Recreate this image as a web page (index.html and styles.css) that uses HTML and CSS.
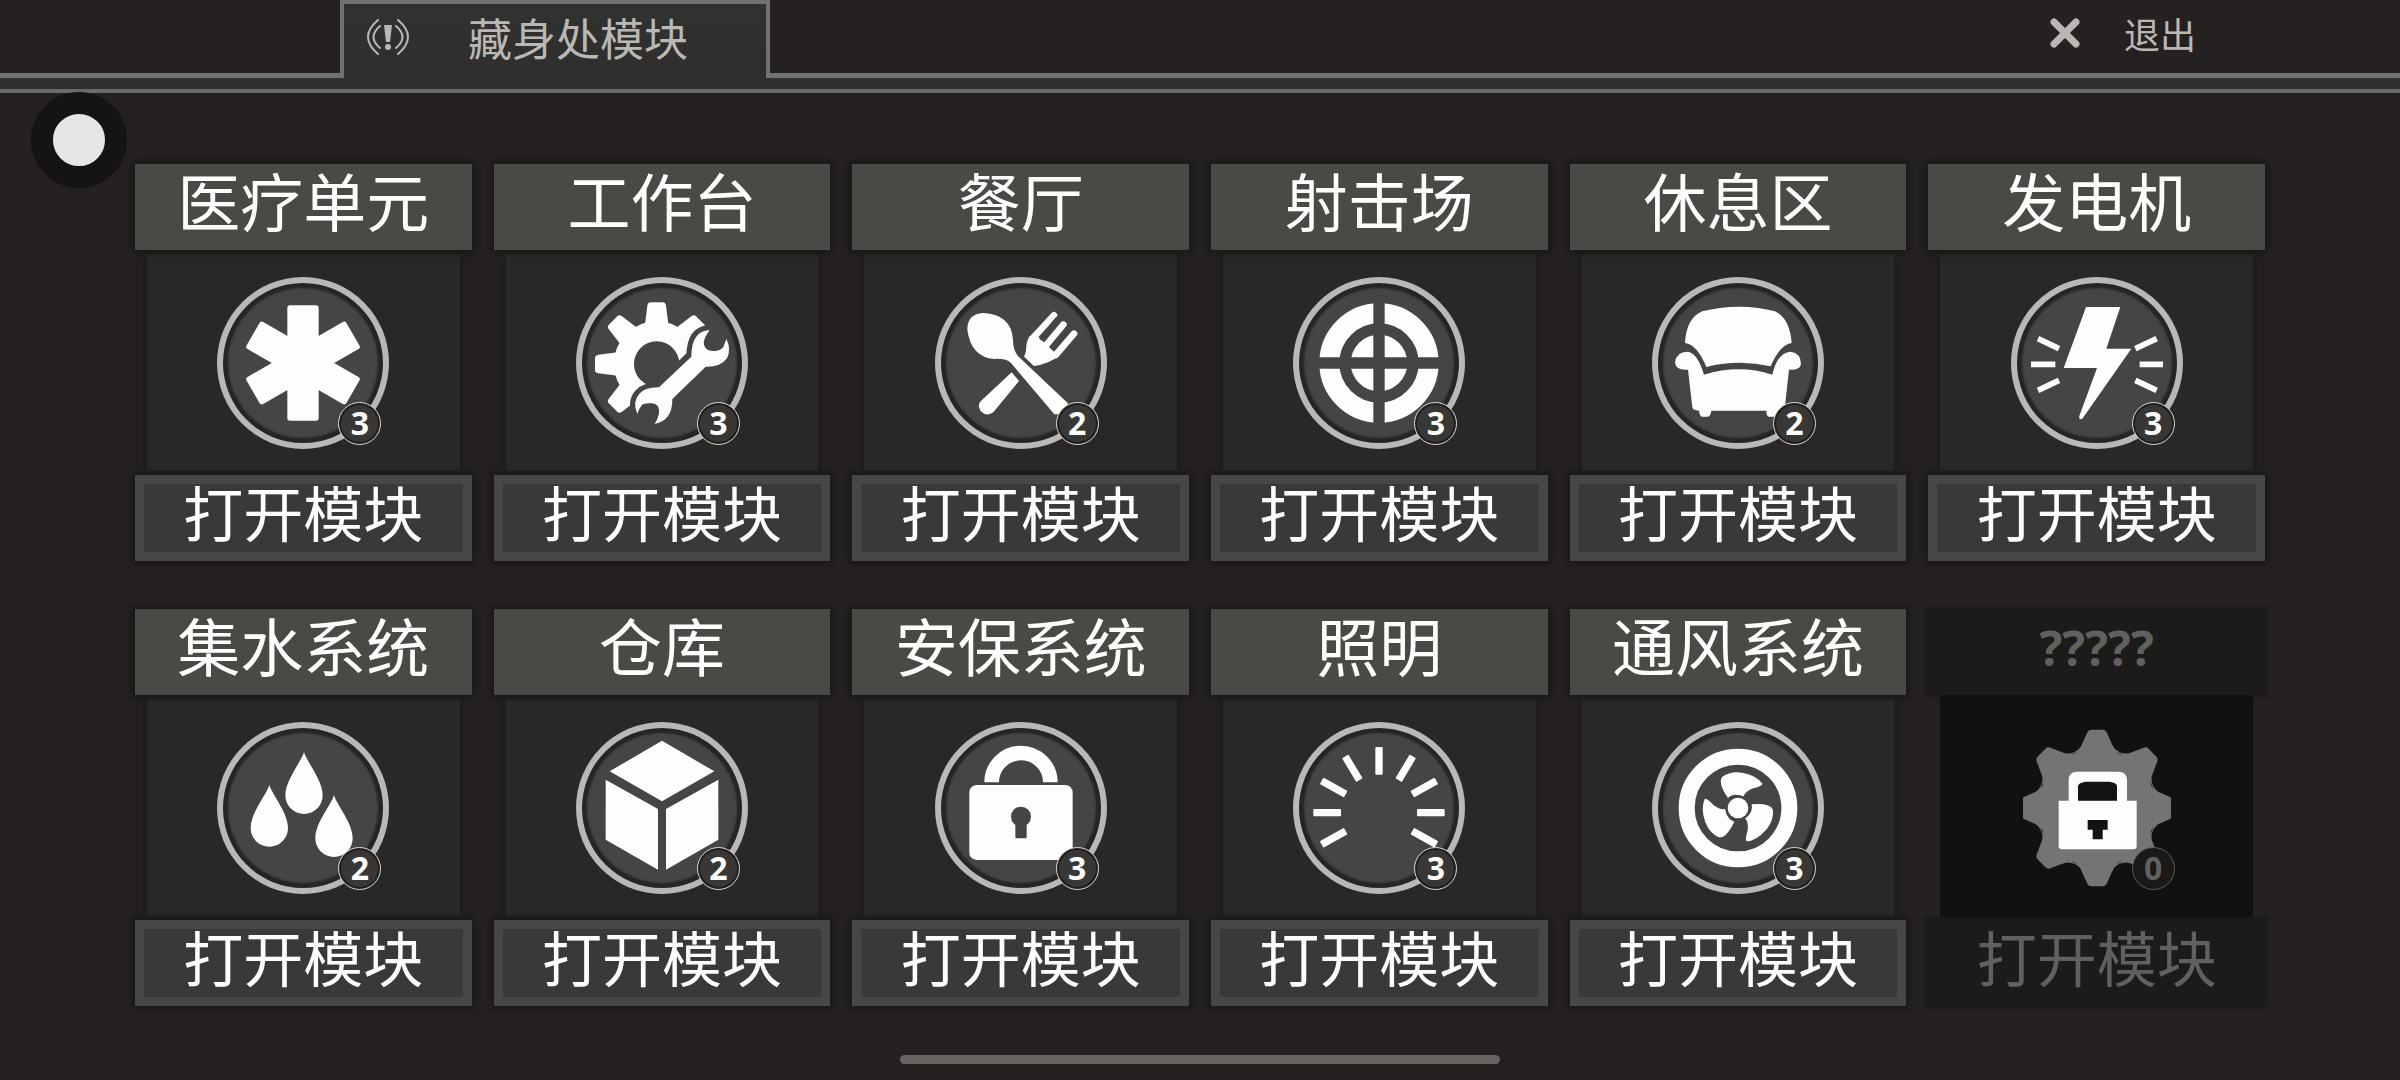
FILE: index.html
```html
<!DOCTYPE html>
<html lang="zh-CN">
  <head>
    <meta charset="utf-8">
    <meta name="viewport" content="width=device-width, initial-scale=1">
    <title>藏身处模块</title>
    <link rel="stylesheet" href="styles.css">
  </head>
  <body>
    <header>
      <div class="topbar">
        <h1 class="tab">
          <svg class="tab-icon" viewBox="0 0 44 38" fill="none" stroke="currentColor" stroke-width="2" stroke-linecap="round">
            <path d="M12 2Q-8 19 12 36M32 2Q52 19 32 36" />
            <path d="M14 8Q1 19 14 30M30 8Q43 19 30 30" />
            <path d="M18 7H26L24 24H20Z" fill="currentColor" stroke="none" />
            <circle cx="22" cy="29" r="3" fill="currentColor" stroke="none" />
          </svg>
          藏身处模块
        </h1>
        <button class="exit" type="button">
          <svg class="exit-icon" viewBox="0 0 30 30" stroke="currentColor" stroke-width="7" stroke-linecap="round">
            <path d="M4 4L26 26M26 4L4 26" />
          </svg>
          退出
        </button>
      </div>
      <div class="rule"></div>
    </header>

    <div class="pointer"></div>

    <main class="modules">
      <section class="card">
        <h2 class="card-title">医疗单元</h2>
        <div class="card-body">
          <div class="emblem">
            <svg viewBox="0 0 516 516">
              <rect x="211" y="85" width="94" height="346" rx="8" />
              <rect x="211" y="85" width="94" height="346" rx="8" transform="rotate(60 258 258)" />
              <rect x="211" y="85" width="94" height="346" rx="8" transform="rotate(-60 258 258)" />
            </svg>
            <span class="level">3</span>
          </div>
        </div>
        <button class="open" type="button">打开模块</button>
      </section>

      <section class="card">
        <h2 class="card-title">工作台</h2>
        <div class="card-body">
          <div class="emblem">
            <svg viewBox="0 0 516 516">
              <defs>
                <clipPath id="gear-half"><path d="M0 0H560L0 560Z" /></clipPath>
                <path id="cog" d="M206 150L214 86Q216 76 224 76H260Q268 76 270 86L278 150Z" />
              </defs>
              <g clip-path="url(#gear-half)">
                <circle class="line" cx="242" cy="261" r="98" stroke-width="60" />
                <use href="#cog" />
                <use href="#cog" transform="rotate(45 242 261)" />
                <use href="#cog" transform="rotate(-45 242 261)" />
                <use href="#cog" transform="rotate(-90 242 261)" />
                <use href="#cog" transform="rotate(-135 242 261)" />
              </g>
              <path class="cutout" stroke-width="30" d="M249 331L346 239Q346 162 401 159Q379 190 384 204Q390 221 405 221Q430 225 442 210L451 186Q466 215 454 242Q435 270 389 269L289 366Q290 430 236 441Q256 410 246 388Q238 379 228 379Q204 377 198 384Q188 395 184 411Q168 375 190 350Q210 330 249 331Z" />
            </svg>
            <span class="level">3</span>
          </div>
        </div>
        <button class="open" type="button">打开模块</button>
      </section>

      <section class="card">
        <h2 class="card-title">餐厅</h2>
        <div class="card-body">
          <div class="emblem">
            <svg viewBox="0 0 516 516">
              <path class="line" stroke-width="20" stroke-linecap="round" d="M357 115L294 183M385 143L335 203M417 170L362 234" />
              <path d="M285 176Q273 190 273 223L265 246L293 268Q350 258 370 236L310 180Z" />
              <path class="gap" stroke-width="18" d="M368 128L323 182M398 158L355 210" />
              <path d="M230 286L252 312L175 406Q155 420 137 403Q125 383 140 370Z" />
              <path class="cutout" stroke-width="22" d="M97 158Q97 110 145 108Q230 112 234 190Q234 225 255 243L398 378Q400 412 358 412L228 258Q212 243 178 246Q108 240 97 158Z" />
            </svg>
            <span class="level">2</span>
          </div>
        </div>
        <button class="open" type="button">打开模块</button>
      </section>

      <section class="card">
        <h2 class="card-title">射击场</h2>
        <div class="card-body">
          <div class="emblem">
            <svg viewBox="0 0 516 516">
              <circle class="line" cx="258" cy="258" r="149" stroke-width="60" />
              <circle cx="258" cy="258" r="85" />
              <path class="gap square" stroke-width="34" d="M258 70V446M70 258H446" />
            </svg>
            <span class="level">3</span>
          </div>
        </div>
        <button class="open" type="button">打开模块</button>
      </section>

      <section class="card">
        <h2 class="card-title">休息区</h2>
        <div class="card-body">
          <div class="emblem">
            <svg viewBox="279 379 516 516">
              <path d="M378 577Q382 502 430 482Q480 468 540 468Q600 468 648 482Q692 502 698 577Q662 582 635 647Q540 625 442 649Q415 582 378 577Z" />
              <path d="M435 672Q540 640 640 672Q655 605 695 603Q725 607 726 640Q722 660 690 657L677 775Q670 782 655 782Q655 798 645 798H630Q622 798 622 780H457Q455 798 445 798H430Q422 798 420 780Q402 780 400 770L387 657Q350 660 348 635Q352 603 385 603Q415 605 435 672Z" />
            </svg>
            <span class="level">2</span>
          </div>
        </div>
        <button class="open" type="button">打开模块</button>
      </section>

      <section class="card">
        <h2 class="card-title">发电机</h2>
        <div class="card-body">
          <div class="emblem">
            <svg viewBox="302 380 516 516">
              <path d="M527 470H630L588 595H663L516 805Q505 810 507 797L560 653H460Z" />
              <path class="line" stroke-width="17" d="M383 565L446 595M362 642H435M383 720L446 690M675 595L739 565M688 642H758M675 690L739 720" />
            </svg>
            <span class="level">3</span>
          </div>
        </div>
        <button class="open" type="button">打开模块</button>
      </section>

      <section class="card">
        <h2 class="card-title">集水系统</h2>
        <div class="card-body">
          <div class="emblem">
            <svg viewBox="0 0 516 516">
              <defs>
                <path id="drop" d="M0 -128C8 -100 56 -45 56 1A56 56 0 0 1 -56 1C-56 -45 -8 -100 0 -128Z" />
              </defs>
              <use href="#drop" x="261" y="219" />
              <use href="#drop" x="157" y="317" />
              <use href="#drop" x="351" y="348" />
            </svg>
            <span class="level">2</span>
          </div>
        </div>
        <button class="open" type="button">打开模块</button>
      </section>

      <section class="card">
        <h2 class="card-title">仓库</h2>
        <div class="card-body">
          <div class="emblem">
            <svg viewBox="0 0 516 516">
              <path d="M258 56L415 148L258 238L101 148Z" />
              <path d="M89 173L246 261V443L89 353Z" />
              <path d="M270 261L427 173V353L270 443Z" />
            </svg>
            <span class="level">2</span>
          </div>
        </div>
        <button class="open" type="button">打开模块</button>
      </section>

      <section class="card">
        <h2 class="card-title">安保系统</h2>
        <div class="card-body">
          <div class="emblem">
            <svg viewBox="0 0 516 516">
              <path class="line" stroke-width="44" d="M170 181A88 88 0 0 1 346 181" />
              <rect x="103" y="189" width="310" height="225" rx="22" />
              <circle class="hole" cx="258" cy="284" r="30" />
              <rect class="hole" x="241" y="290" width="34" height="59" rx="3" />
            </svg>
            <span class="level">3</span>
          </div>
        </div>
        <button class="open" type="button">打开模块</button>
      </section>

      <section class="card">
        <h2 class="card-title">照明</h2>
        <div class="card-body">
          <div class="emblem">
            <svg viewBox="0 0 516 516">
              <defs>
                <rect id="ray" x="247" y="75" width="22" height="83" rx="3" />
              </defs>
              <use href="#ray" />
              <use href="#ray" transform="rotate(31 258 272)" />
              <use href="#ray" transform="rotate(61 258 272)" />
              <use href="#ray" transform="rotate(90 258 272)" />
              <use href="#ray" transform="rotate(119 258 272)" />
              <use href="#ray" transform="rotate(-31 258 272)" />
              <use href="#ray" transform="rotate(-61 258 272)" />
              <use href="#ray" transform="rotate(-90 258 272)" />
              <use href="#ray" transform="rotate(-119 258 272)" />
            </svg>
            <span class="level">3</span>
          </div>
        </div>
        <button class="open" type="button">打开模块</button>
      </section>

      <section class="card">
        <h2 class="card-title">通风系统</h2>
        <div class="card-body">
          <div class="emblem">
            <svg viewBox="274 364 516 516">
              <defs>
                <path id="blade" d="M502 592Q470 545 485 528Q510 510 545 516Q590 525 606 550Q600 558 580 562Q555 570 548 588Q520 575 502 592Z" />
              </defs>
              <circle class="line" cx="532" cy="622" r="154" stroke-width="48" />
              <use href="#blade" />
              <use href="#blade" transform="rotate(120 532 622)" />
              <use href="#blade" transform="rotate(240 532 622)" />
              <circle class="cutout" cx="532" cy="622" r="31" stroke-width="14" />
            </svg>
            <span class="level">3</span>
          </div>
        </div>
        <button class="open" type="button">打开模块</button>
      </section>

      <section class="card locked">
        <h2 class="card-title">?????</h2>
        <div class="card-body">
          <div class="emblem">
            <svg viewBox="0 0 516 516">
              <defs>
                <clipPath id="gear-sides"><rect x="36" y="0" width="444" height="516" /></clipPath>
                <path id="tooth" d="M186 92Q208 84 214 64L228 33Q232 23 242 23H274Q284 23 288 33L302 64Q308 84 330 92Z" />
              </defs>
              <g class="gear" clip-path="url(#gear-sides)">
                <circle cx="258" cy="258" r="177" />
                <use href="#tooth" />
                <use href="#tooth" transform="rotate(45 258 258)" />
                <use href="#tooth" transform="rotate(90 258 258)" />
                <use href="#tooth" transform="rotate(135 258 258)" />
                <use href="#tooth" transform="rotate(180 258 258)" />
                <use href="#tooth" transform="rotate(225 258 258)" />
                <use href="#tooth" transform="rotate(270 258 258)" />
                <use href="#tooth" transform="rotate(315 258 258)" />
              </g>
              <path d="M173 236V175Q173 149 199 149H322Q348 149 348 175V236H377V372Q377 382 367 382H153Q143 382 143 372V236Z" />
              <path class="hole" d="M201 236V192Q203 182 224 179H296Q317 182 318 192V236ZM230 294H290V323H275V352H245V323H230Z" />
            </svg>
            <span class="level">0</span>
          </div>
        </div>
        <button class="open" type="button" disabled>打开模块</button>
      </section>
    </main>

    <div class="home-bar"></div>
  </body>
</html>
```

FILE: styles.css
```css
* {
  box-sizing: border-box;
}

html,
body {
  margin: 0;
  padding: 0;
}

body {
  min-height: 100vh;
  background: #242120;
  color: #fdfdfb;
  font-family: "Noto Sans CJK SC", "Open Sans", sans-serif;
}

h1,
h2 {
  margin: 0;
  font-weight: normal;
}

button {
  margin: 0;
  font-family: inherit;
  cursor: pointer;
}

/* top bar */

.topbar {
  display: flex;
  justify-content: space-between;
  align-items: flex-start;
  height: 73px;
  padding: 0 198px 0 340px;
  background: #252120;
  color: #bab8b5;
}

.tab {
  position: relative;
  display: flex;
  align-items: center;
  gap: 58px;
  height: 78px;
  padding: 0 78px 8px 22px;
  border: 4px solid #70726f;
  border-bottom: 0;
  background: linear-gradient(#2f332f, #312f2e 60%);
  font-size: 44px;
  line-height: 64px;
}

.tab-icon {
  width: 44px;
  height: 38px;
}

.exit {
  display: flex;
  align-items: center;
  gap: 44px;
  padding: 5px 6px;
  border: 0;
  background: none;
  color: inherit;
  font-size: 36px;
  line-height: 56px;
}

.exit-icon {
  width: 30px;
  height: 30px;
}

.rule {
  height: 20px;
  border-top: 5px solid #6f726f;
  border-bottom: 4px solid #6c6b68;
  background: #2f312e;
}

.pointer {
  position: absolute;
  top: 92px;
  left: 31px;
  width: 96px;
  height: 96px;
  border: 22px solid #151413;
  border-radius: 50%;
  background: #e6e5e4;
}

/* module grid */

.modules {
  display: grid;
  grid-template-columns: repeat(6, 1fr);
  gap: 48px 22px;
  padding: 71px 135px 49px;
}

.card {
  display: flex;
  flex-direction: column;
  gap: 4px;
}

.card-title,
.open {
  position: relative;
  height: 86px;
  text-align: center;
  white-space: nowrap;
  box-shadow: 0 0 5px 3px #1a1918;
}

.card-title {
  padding-bottom: 16px;
  background: #4a4946;
  font-size: 63px;
  line-height: 70px;
}

.open {
  padding: 0 0 14px;
  border: 9px solid #484745;
  background: #3a3937;
  color: inherit;
  font-size: 60px;
  line-height: 54px;
}

.card-body {
  display: flex;
  justify-content: center;
  align-items: center;
  height: 217px;
  margin: 0 12px;
  background: #292826;
  box-shadow: 0 0 6px 2px #1d1c1a;
}

.emblem {
  position: relative;
  width: 172px;
  height: 172px;
  border-radius: 50%;
  background: #464543;
  box-shadow: inset 0 0 0 6px #b9b8b6, inset 0 0 2px 11px #262523;
}

.emblem svg {
  display: block;
  width: 100%;
  height: 100%;
  fill: #fdfdfc;
}

.emblem .line {
  fill: none;
  stroke: #fdfdfc;
}

.emblem .gap {
  fill: none;
  stroke: #464543;
  stroke-linecap: round;
}

.emblem .square {
  stroke-linecap: butt;
}

.emblem .cutout {
  stroke: #464543;
  stroke-linejoin: round;
  paint-order: stroke;
}

.emblem .hole {
  fill: #464543;
}

.level {
  position: absolute;
  right: 8px;
  bottom: 4px;
  width: 43px;
  height: 43px;
  border: 1px solid #d8d7d5;
  border-radius: 50%;
  background: #383735;
  box-shadow: inset 0 0 0 2px #201f1e;
  font-family: "Open Sans", sans-serif;
  font-size: 32px;
  font-weight: bold;
  line-height: 40px;
  text-align: center;
}

/* module that is not available yet */

.locked {
  color: #62605e;
}

.locked .card-title,
.locked .open {
  background: #1c1b19;
  border-color: #1c1b19;
  box-shadow: 0 0 2px 3px #1c1b19;
}

.locked .open {
  cursor: default;
}

.locked .card-title {
  padding-bottom: 8px;
  font-family: "Open Sans", sans-serif;
  font-size: 48px;
  font-weight: bold;
  line-height: 78px;
}

.locked .card-body {
  position: relative;
  background: #12110f;
  box-shadow: 0 0 0 4px #12110f;
  clip-path: inset(-4px 0);
}

.locked .emblem {
  background: none;
  box-shadow: none;
}

.locked .emblem .gear {
  fill: #757472;
}

.locked .emblem .hole {
  fill: #141312;
}

.locked .level {
  border-color: #5c5b59;
  background: #1a1918;
  box-shadow: none;
}

.home-bar {
  width: 25%;
  height: 9px;
  margin: 0 auto;
  border-radius: 5px;
  background: #676361;
}
```
